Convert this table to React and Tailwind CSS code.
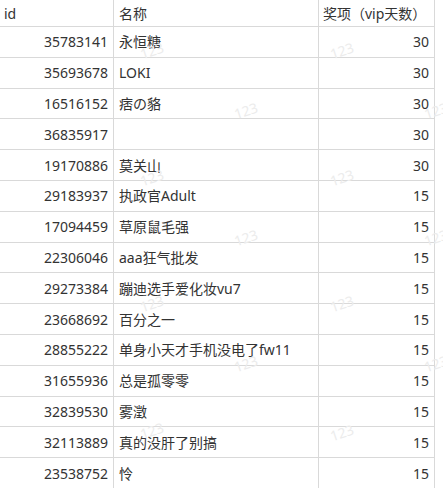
import React from "react";

const rows = [
  ["35783141", "永恒糖", "30"],
  ["35693678", "LOKI", "30"],
  ["16516152", "痞の貉", "30"],
  ["36835917", "", "30"],
  ["19170886", "莫关山", "30"],
  ["29183937", "执政官Adult", "15"],
  ["17094459", "草原鼠毛强", "15"],
  ["22306046", "aaa狂气批发", "15"],
  ["29273384", "蹦迪选手爱化妆vu7", "15"],
  ["23668692", "百分之一", "15"],
  ["28855222", "单身小天才手机没电了fw11", "15"],
  ["31655936", "总是孤零零", "15"],
  ["32839530", "雾澂", "15"],
  ["32113889", "真的没肝了别搞", "15"],
  ["23538752", "怜", "15"],
];

const marks = [
  [140, 44], [330, 44], [234, 104], [424, 104],
  [140, 171], [330, 171], [234, 231], [424, 231],
  [140, 297], [330, 297], [234, 357], [424, 357],
  [140, 424], [330, 426],
];

export default function App() {
  return (
    <div
      className="relative w-[443px] h-[488px] overflow-hidden bg-white text-[14px] text-[#333]"
      style={{ fontFamily: '"Noto Sans", "Noto Sans CJK SC", sans-serif' }}
    >
      <div className="flex flex-col w-[435px]">
        <div className="flex h-[27px] border-b border-[#d9d9d9]">
          <div className="w-[114px] shrink-0 border-r border-[#d9d9d9] pl-[4px] flex items-center">id</div>
          <div className="w-[205px] shrink-0 border-r border-[#d9d9d9] pl-[5px] flex items-center">名称</div>
          <div className="w-[116px] shrink-0 border-r border-[#d9d9d9] pl-[4px] flex items-center">奖项（vip天数）</div>
        </div>
        {rows.map((r, i) => (
          <div key={i} className="flex h-[30.8px] border-b border-[#d9d9d9]">
            <div className="w-[114px] shrink-0 border-r border-[#d9d9d9] pr-[5px] flex items-center justify-end">{r[0]}</div>
            <div className="w-[205px] shrink-0 border-r border-[#d9d9d9] pl-[5px] flex items-center whitespace-nowrap">{r[1]}</div>
            <div className="w-[116px] shrink-0 border-r border-[#d9d9d9] pr-[5px] flex items-center justify-end">{r[2]}</div>
          </div>
        ))}
        <div className="flex h-[40px]">
          <div className="w-[114px] shrink-0 border-r border-[#d9d9d9]"></div>
          <div className="w-[205px] shrink-0 border-r border-[#d9d9d9]"></div>
          <div className="w-[116px] shrink-0 border-r border-[#d9d9d9]"></div>
        </div>
      </div>
      {marks.map(([x, y], i) => (
        <div
          key={i}
          className="absolute pointer-events-none text-[14px] text-[#ececec] -rotate-[18deg] leading-none"
          style={{ left: x, top: y }}
        >
          123
        </div>
      ))}
    </div>
  );
}
